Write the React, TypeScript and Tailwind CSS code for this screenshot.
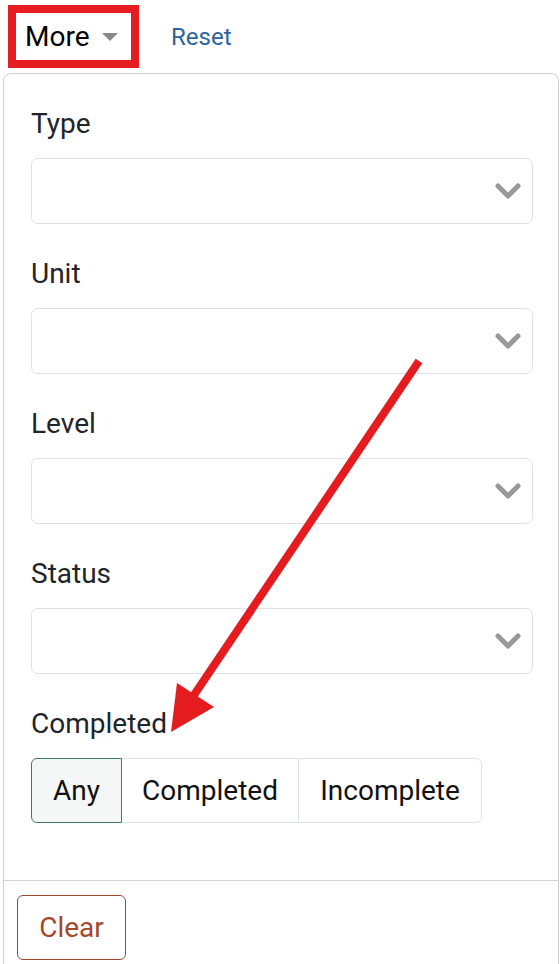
import { ReactNode } from "react";

const fields = ["Type", "Unit", "Level", "Status"];

function Chevron() {
  return (
    <svg width="26" height="18" viewBox="0 0 26 18" className="shrink-0">
      <polyline points="3,4 13,14 23,4" fill="none" stroke="#999999" strokeWidth="5" strokeLinecap="round" strokeLinejoin="round" />
    </svg>
  );
}

function Label({ children }: { children: ReactNode }) {
  return <div className="h-[36px] leading-[36px] text-[28px] text-[#212529] mb-[16px]">{children}</div>;
}

function SelectBox() {
  return (
    <div className="w-[502px] h-[66px] border border-[#dee2e6] rounded-[7px] bg-white flex items-center justify-end pr-[11px]">
      <Chevron />
    </div>
  );
}

export default function App() {
  return (
    <div className="relative w-[560px] h-[964px] bg-white overflow-hidden font-['Roboto',sans-serif]">
      <div className="flex items-center pt-[5px] pl-[8px]">
        <button className="w-[131px] h-[63px] border-[8px] border-[#e51c21] bg-white flex items-center pl-[9px] gap-[12px]">
          <span className="text-[28px] text-black leading-none">More</span>
          <svg width="16" height="8" viewBox="0 0 16 8">
            <polygon points="0,0 16,0 8,8" fill="#8a8a8a" />
          </svg>
        </button>
        <span className="ml-[32px] text-[24px] text-[#2b65a0]">Reset</span>
      </div>

      <div className="mt-[5px] ml-[3px] w-[556px] border border-[#cfcfcf] rounded-t-[8px] bg-white">
        <div className="pt-[32px] pl-[27px] pb-[57px]">
          {fields.map((f) => (
            <div key={f} className="mb-[32px]">
              <Label>{f}</Label>
              <SelectBox />
            </div>
          ))}
          <Label>Completed</Label>
          <div className="flex h-[65px] w-fit text-[28px] text-[#111]">
            <div className="w-[91px] flex items-center justify-center border border-[#3f7d5c] bg-[#f4f7f6] rounded-l-[6px]">Any</div>
            <div className="w-[177px] flex items-center justify-center border-y border-r border-[#dee2e6]">Completed</div>
            <div className="w-[183px] flex items-center justify-center border-y border-r border-[#dee2e6] rounded-r-[6px]">Incomplete</div>
          </div>
        </div>
        <div className="border-t border-[#d0d0d0] pt-[14px] pl-[13px] pb-[10px]">
          <button className="w-[109px] h-[65px] border border-[#a3472f] rounded-[6px] text-[28px] text-[#a6472c]">Clear</button>
        </div>
      </div>

      <svg className="absolute left-0 top-0 pointer-events-none" width="560" height="964">
        <line x1="419" y1="361" x2="192" y2="698" stroke="#e51c1f" strokeWidth="8" />
        <polygon points="177,683 214,707 171,732" fill="#e51c1f" />
      </svg>
    </div>
  );
}
